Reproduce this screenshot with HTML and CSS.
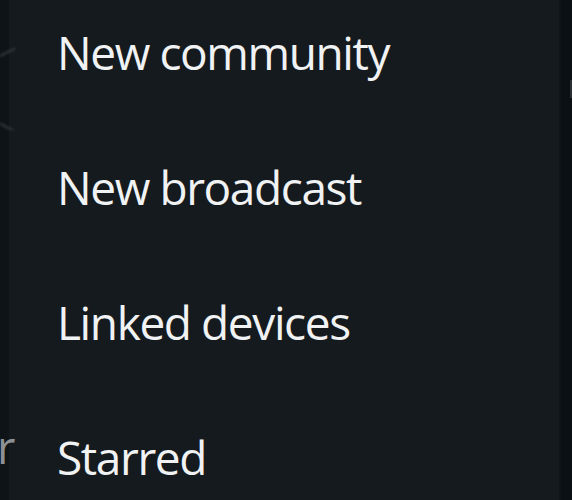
FILE: index.html
```html
<!DOCTYPE html>
<html lang="en">
<head>
	<meta charset="UTF-8">
	<title>menu</title>
	<link rel="stylesheet" href="styles.css">
</head>
<body>
	<div class="screen">
		<div class="behind">
			<svg class="back" width="30" height="100" viewBox="0 0 30 100">
				<path d="M-14 33 L14 19 M-14 86 L14 101" stroke="#3a4045" stroke-width="3" fill="none" stroke-linecap="round"/>
			</svg>
			<span class="peek">r</span>
		</div>
		<ul class="menu">
			<li>New community</li>
			<li>New broadcast</li>
			<li>Linked devices</li>
			<li>Starred</li>
		</ul>
		<div class="edge">
			<span class="edge-mark"></span>
		</div>
	</div>
</body>
</html>
```

FILE: styles.css
```css
/*css reset*/
html,body,div,ul,li{
	padding: 0;
	margin: 0;
}
ul{list-style-type: none;}
body{
	background: #0e1317;
	font-family: "Open Sans", "Noto Sans", sans-serif;
	overflow: hidden;
}

/*layout*/
.screen{
	display: flex;
	height: 500px;
	overflow: hidden;
}
.behind{
	width: 9px;
	flex-shrink: 0;
	position: relative;
	background: #0e1317;
}
.back{
	position: absolute;
	top: 30px;
	left: 0;
	z-index: 2;
	opacity: .6;
	filter: blur(1px);
}
.peek{
	position: absolute;
	top: 416px;
	left: -3px;
	font-size: 45px;
	font-weight: 370;
	color: #8d9194;
}
.menu{
	flex: 1;
	background: #151a1e;
	margin-top: -15px;
	padding-left: 48px;
}
.menu li{
	height: 135px;
	line-height: 135px;
	font-size: 46px;
	font-weight: 370;
	letter-spacing: -1.4px;
	color: #f0f2f3;
	white-space: nowrap;
}
.edge{
	width: 11px;
	flex-shrink: 0;
	background: #0b1014;
	border-left: 2px solid #0f1418;
	position: relative;
}
.edge-mark{
	position: absolute;
	top: 80px;
	right: 0;
	width: 2px;
	height: 18px;
	background: #2b3035;
}
```
